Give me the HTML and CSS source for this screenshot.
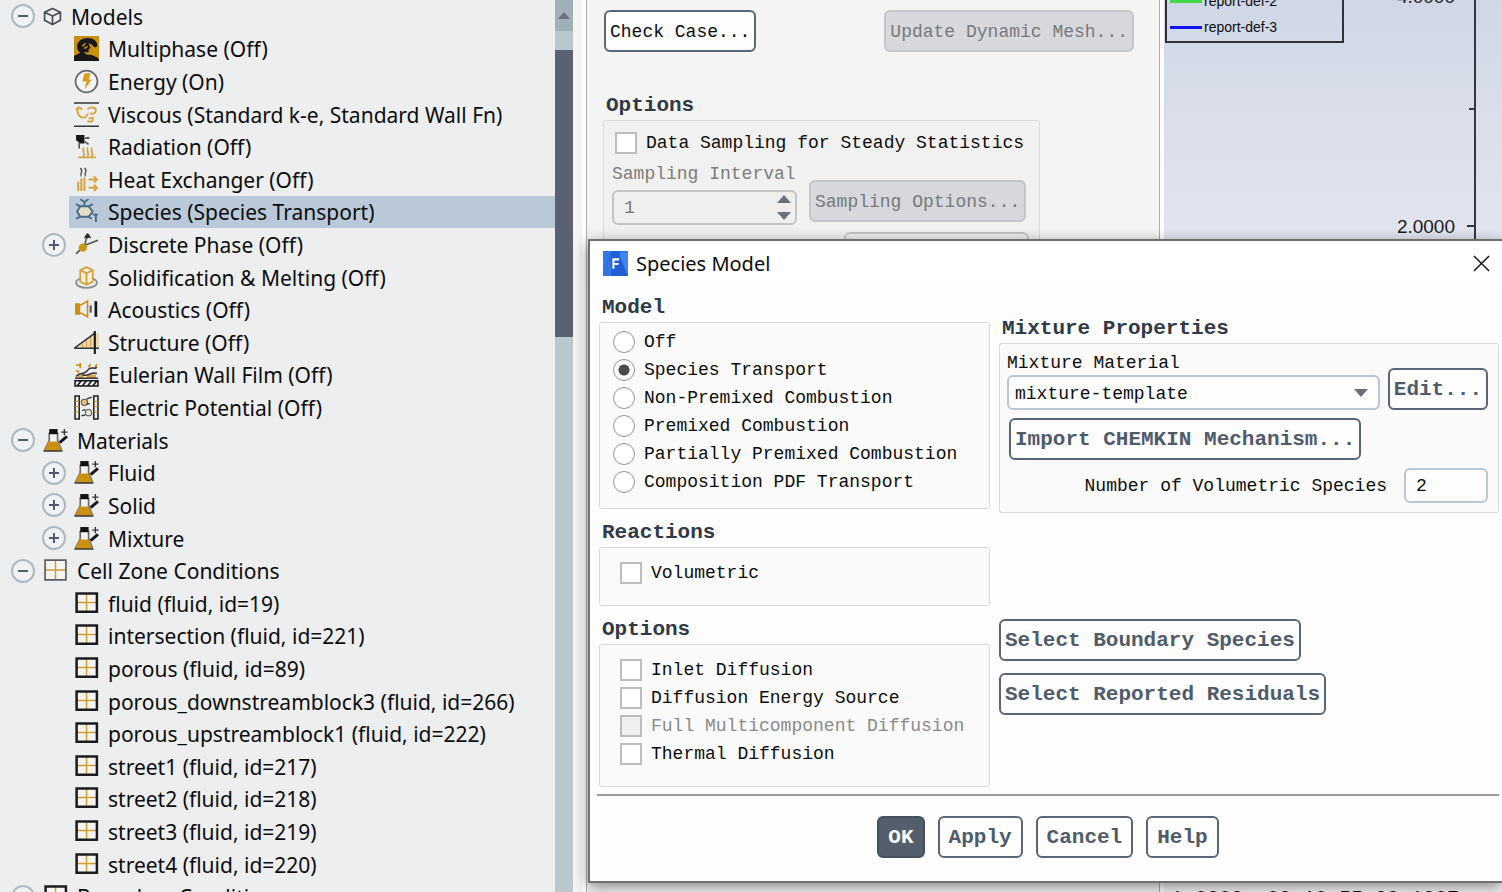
FILE: index.html
```html
<!DOCTYPE html>
<html lang="en">
<head>
<meta charset="utf-8">
<title>Species Model</title>
<link rel="stylesheet" href="styles.css">
</head>
<body>
<svg class="defs" aria-hidden="true">
  <symbol id="i-cube" viewBox="0 0 18 18"><path d="M9 1.500 16.500 5v7.500L9 16.500 1.500 12.500V5zM1.500 5 9 8.500 16.500 5M9 8.500v8" fill="none" stroke="#4a4d55" stroke-width="1.600" stroke-linejoin="round"/></symbol>
  <symbol id="i-multi" viewBox="0 0 24 24"><path fill="#c8900f" d="M0 0h24v24H0z"/><path fill="#17161a" d="M0 19C3 18 4 17 6 16 2 13 2 8 5 5c4-4 11-4 15-1 2 2 3 4 2 6-2 2-4 0-5-2-1 0-2-1-3-1l1 3c2 0 1 4-1 5-1 1-3 1-4 0-1 2 3 3 6 3 3 1 6 2 8 4v2H0z"/><path d="M8 10l3-3M10 12l3-2M14 14l3-3" stroke="#c8900f" stroke-width="1.500"/></symbol>
  <symbol id="i-energy" viewBox="0 0 24 24"><circle cx="12" cy="12" r="10.500" fill="#f5f5f4" stroke="#686c73" stroke-width="1.700"/><path fill="#d99b20" d="M10 4h6l-2 6h3l-7 10 2-8H8z"/></symbol>
  <symbol id="i-viscous" viewBox="0 0 24 24"><path d="M0 1h24M0 23.200h24" stroke="#33353a" stroke-width="1.500"/><g fill="none" stroke="#d9a840" stroke-width="1.800"><path d="M4 6c-2 4 1 9 5 9 2 0 4-2 4-4M2 8l2-3 4 2M13 7c3-3 8-2 8 1s-3 4-6 3M13 18c2 2 6 1 5-3l-4 1"/></g></symbol>
  <symbol id="i-rad" viewBox="0 0 24 24"><path fill="#17181c" d="M2 1h8v8H6L2 6z"/><path d="M10 4h5M10 7l4 3M5 8v6M12 4l2-1" stroke="#555" stroke-width="1.500"/><g fill="none" stroke="#d9a440" stroke-width="1.700"><path d="M9 22c2-3-1-5 0-9M13 22c2-3-1-5 0-9M17 22c2-3-1-5 0-9M4 22.500h17"/></g></symbol>
  <symbol id="i-heat" viewBox="0 0 24 24"><g fill="none" stroke="#55585d" stroke-width="1.400"><path d="M6 1c4 3-1 4 1 8M10 1c4 3-1 4 1 8"/></g><g fill="none" stroke="#d9a440" stroke-width="1.900"><path d="M4 23V14M7 23V11M10 23V10M14 12h8M19 9l3 3-3 3M14 20h8M19 17l3 3-3 3"/></g></symbol>
  <symbol id="i-species" viewBox="0 0 24 24"><path fill="#e2dfc8" d="M7 7h7l4 5-4 5H7l-4-5z"/><path d="M6 7h8l4 5-4 5H6l-3-5zM10 7V3M6 0l4 3 4-3M6 7 2 5M14 7l4-2M6 17l-4 2M14 17l3 2M18 15h5M21 15v7" fill="none" stroke="#496984" stroke-width="1.800"/></symbol>
  <symbol id="i-discrete" viewBox="0 0 24 24"><path d="M2 21 10 13 23 8M10 13l3-10M10 6l3-4 3 4" fill="none" stroke="#55575c" stroke-width="1.600"/><circle cx="8.500" cy="15" r="4" fill="#d09514"/><circle cx="13" cy="4" r="2" fill="#26272b"/></symbol>
  <symbol id="i-solid" viewBox="0 0 24 24"><ellipse cx="12" cy="17" rx="10" ry="5" fill="none" stroke="#8a8d93" stroke-width="1.700"/><path d="M6 5 12 2l6 3v11l-6 3-6-3zM6 5l6 3 6-3M12 8v11" fill="#f4efdf" stroke="#d5a13a" stroke-width="1.700"/></symbol>
  <symbol id="i-acoustic" viewBox="0 0 24 24"><path fill="#c8900f" d="M1 6h5v11H1z"/><path d="M6 8l7-4v15l-7-4" fill="none" stroke="#c8900f" stroke-width="1.500"/><path d="M16 8v7" stroke="#55575c" stroke-width="2"/><path d="M21 4v15" stroke="#17181c" stroke-width="2.600"/></symbol>
  <symbol id="i-structure" viewBox="0 0 24 24"><path fill="#ecd7ad" d="M3 17 20 3h4v14z"/><path d="M8 17v-4M12 17v-8M16 17V6" stroke="#cfa04a" stroke-width="1"/><path d="M0 17.500h24M1 17 20 3" fill="none" stroke="#33353a" stroke-width="1.500"/><path d="M20 1v22" stroke="#17181c" stroke-width="2"/></symbol>
  <symbol id="i-film" viewBox="0 0 24 24"><path d="M2 3h4M6 1v5M14 5l2-3M20 6l2-4M5 10l-3-2" stroke="#d09514" stroke-width="1.800"/><path fill="#d9a440" d="M4 12h5v4H4zM12 12h9v4h-9z"/><path d="M2 14C5 9 10 13 13 8s6 0 9-3M8 12c5 3 8-3 14-1M1 15.500h22" fill="none" stroke="#33353a" stroke-width="1.400"/><path d="M1 18h22v5H1zM3 23l4-5M8 23l4-5M13 23l4-5M18 23l4-5" fill="none" stroke="#17181c" stroke-width="1.500"/></symbol>
  <symbol id="i-electric" viewBox="0 0 24 24"><path d="M1 1h4v22H1zM19 1h4v22h-4z" fill="#f4f1e8" stroke="#222" stroke-width="1.500"/><path d="M1 6h4M1 11h4M1 16h4M19 6h4M19 11h4M19 16h4" stroke="#c8900f"/><circle cx="10" cy="7" r="3" fill="#e4c27c" stroke="#55575c"/><circle cx="14" cy="17" r="3" fill="#e9e5d8" stroke="#55575c"/><path d="M12 4l5-2M7 20l4-1M12 9l3-1M8 15l3-1" stroke="#33353a" stroke-width="1.300"/></symbol>
  <symbol id="i-flask" viewBox="0 0 24 24"><path d="M6 5h8v7l4 10H1l5-10z" fill="#f4f4f4" stroke="#6a6c70" stroke-width="1.600"/><path fill="#cc9110" d="M5 13h9l3.500 8h-16z"/><path fill="#111216" d="M6 1h8v5H6z"/><path d="M1 22h17" stroke="#4a4334" stroke-width="1.200"/><path d="M20.500 1v6M17.500 4h6" stroke="#33353a" stroke-width="1.300"/><path d="M16 14l7-6" stroke="#17181c" stroke-width="2.800"/></symbol>
  <symbol id="i-cells" viewBox="0 0 24 24"><path fill="#f5f4f0" d="M2 2h20v19H2z"/><path d="M12 2v19M2 11.500h20" stroke="#cf9d38" stroke-width="1.400"/><path d="M2 2h20v19H2z" fill="none" stroke="#5b5d62" stroke-width="1.600"/></symbol>
  <symbol id="i-zone" viewBox="0 0 24 24"><path fill="#f5f4f0" d="M2 2h20v18H2z"/><path d="M12 2v18M2 11h20" stroke="#cf9d38" stroke-width="1.400"/><path d="M2.500 2.500h19.500v17.500H2.500z" fill="none" stroke="#1b1c20" stroke-width="2.400"/></symbol>
</svg>

<div class="app">
  <nav class="outline" aria-label="Outline">
    <ul class="tree">
      <li class="row root"><button class="toggle" aria-label="Collapse Models"></button><svg class="icon small"><use href="#i-cube"/></svg><span>Models</span></li>
      <li class="row leaf"><svg class="icon"><use href="#i-multi"/></svg><span>Multiphase (Off)</span></li>
      <li class="row leaf"><svg class="icon"><use href="#i-energy"/></svg><span>Energy (On)</span></li>
      <li class="row leaf"><svg class="icon"><use href="#i-viscous"/></svg><span>Viscous (Standard k-e, Standard Wall Fn)</span></li>
      <li class="row leaf"><svg class="icon"><use href="#i-rad"/></svg><span>Radiation (Off)</span></li>
      <li class="row leaf"><svg class="icon"><use href="#i-heat"/></svg><span>Heat Exchanger (Off)</span></li>
      <li class="row leaf selected"><svg class="icon"><use href="#i-species"/></svg><span>Species (Species Transport)</span></li>
      <li class="row branch"><button class="toggle plus" aria-label="Expand Discrete Phase"></button><svg class="icon"><use href="#i-discrete"/></svg><span>Discrete Phase (Off)</span></li>
      <li class="row leaf"><svg class="icon"><use href="#i-solid"/></svg><span>Solidification &amp; Melting (Off)</span></li>
      <li class="row leaf"><svg class="icon"><use href="#i-acoustic"/></svg><span>Acoustics (Off)</span></li>
      <li class="row leaf"><svg class="icon"><use href="#i-structure"/></svg><span>Structure (Off)</span></li>
      <li class="row leaf"><svg class="icon"><use href="#i-film"/></svg><span>Eulerian Wall Film (Off)</span></li>
      <li class="row leaf"><svg class="icon"><use href="#i-electric"/></svg><span>Electric Potential (Off)</span></li>
      <li class="row root"><button class="toggle" aria-label="Collapse Materials"></button><svg class="icon"><use href="#i-flask"/></svg><span>Materials</span></li>
      <li class="row branch"><button class="toggle plus" aria-label="Expand Fluid"></button><svg class="icon"><use href="#i-flask"/></svg><span>Fluid</span></li>
      <li class="row branch"><button class="toggle plus" aria-label="Expand Solid"></button><svg class="icon"><use href="#i-flask"/></svg><span>Solid</span></li>
      <li class="row branch"><button class="toggle plus" aria-label="Expand Mixture"></button><svg class="icon"><use href="#i-flask"/></svg><span>Mixture</span></li>
      <li class="row root"><button class="toggle" aria-label="Collapse Cell Zone Conditions"></button><svg class="icon"><use href="#i-cells"/></svg><span>Cell Zone Conditions</span></li>
      <li class="row leaf"><svg class="icon"><use href="#i-zone"/></svg><span>fluid (fluid, id=19)</span></li>
      <li class="row leaf"><svg class="icon"><use href="#i-zone"/></svg><span>intersection (fluid, id=221)</span></li>
      <li class="row leaf"><svg class="icon"><use href="#i-zone"/></svg><span>porous (fluid, id=89)</span></li>
      <li class="row leaf"><svg class="icon"><use href="#i-zone"/></svg><span>porous_downstreamblock3 (fluid, id=266)</span></li>
      <li class="row leaf"><svg class="icon"><use href="#i-zone"/></svg><span>porous_upstreamblock1 (fluid, id=222)</span></li>
      <li class="row leaf"><svg class="icon"><use href="#i-zone"/></svg><span>street1 (fluid, id=217)</span></li>
      <li class="row leaf"><svg class="icon"><use href="#i-zone"/></svg><span>street2 (fluid, id=218)</span></li>
      <li class="row leaf"><svg class="icon"><use href="#i-zone"/></svg><span>street3 (fluid, id=219)</span></li>
      <li class="row leaf"><svg class="icon"><use href="#i-zone"/></svg><span>street4 (fluid, id=220)</span></li>
      <li class="row root"><button class="toggle" aria-label="Collapse Boundary Conditions"></button><svg class="icon"><use href="#i-zone"/></svg><span>Boundary Conditions</span></li>
    </ul>
    <div class="scrollbar"><button class="scroll-up" aria-label="Scroll up"></button><div class="thumb"></div></div>
  </nav>

  <main class="task">
    <div class="task-actions">
      <button class="btn plain">Check Case...</button>
      <button class="btn plain" disabled>Update Dynamic Mesh...</button>
    </div>
    <h2 class="heading">Options</h2>
    <section class="group sampling">
      <label class="check"><input type="checkbox">Data Sampling for Steady Statistics</label>
      <div class="pair">
        <div class="spin-field">
          <label class="dim" for="interval">Sampling Interval</label>
          <div class="spin"><input class="text" id="interval" type="text" value="1" disabled><span class="arrows"><i class="up"></i><i class="down"></i></span></div>
        </div>
        <button class="btn plain" disabled>Sampling Options...</button>
      </div>
      <div class="sampled"><label for="sampled">Iterations Sampled</label><input class="text" id="sampled" type="text" value="0" readonly></div>
    </section>
  </main>

  <section class="view">
    <div class="graph">
      <ul class="legend">
        <li><i class="line green"></i>report-def-2</li>
        <li><i class="line blue"></i>report-def-3</li>
      </ul>
      <svg class="axis" viewBox="0 0 110 480" role="img" aria-label="Residual axis">
        <path d="M83 0v480M77 109h6M75 226h8" stroke="#33363e" stroke-width="2"/>
        <text x="63" y="3" text-anchor="end">4.0000</text>
        <text x="63" y="233" text-anchor="end">2.0000</text>
      </svg>
    </div>
    <div class="console">1.0000e-00 10:55:08 1907</div>
  </section>

  <form class="dialog" role="dialog" aria-labelledby="dialog-title" onsubmit="return false">
    <header class="titlebar">
      <svg class="logo" viewBox="0 0 24 24"><path fill="#2f79ea" d="M0 0h24v24H0z"/><path fill="#1f5fd6" d="M0 24 8 0h8v6l8 18z"/><path fill="#69a5f8" d="M0 24 8 2v22zM16 2h8v22z" opacity=".3"/><path fill="none" stroke="#fff" stroke-width="2" d="M10 17V8h5.500M10 12.500h5"/></svg>
      <h1 id="dialog-title">Species Model</h1>
      <button type="button" class="close" aria-label="Close"><svg viewBox="0 0 18 18"><path d="M1 1l16 16M17 1 1 17" stroke="#111" stroke-width="1.500"/></svg></button>
    </header>
    <div class="columns">
      <div class="left">
        <h2 class="heading">Model</h2>
        <section class="group radios">
          <label class="check"><input type="radio" name="model">Off</label>
          <label class="check"><input type="radio" name="model" checked>Species Transport</label>
          <label class="check"><input type="radio" name="model">Non-Premixed Combustion</label>
          <label class="check"><input type="radio" name="model">Premixed Combustion</label>
          <label class="check"><input type="radio" name="model">Partially Premixed Combustion</label>
          <label class="check"><input type="radio" name="model">Composition PDF Transport</label>
        </section>
        <h2 class="heading">Reactions</h2>
        <section class="group boxes">
          <label class="check"><input type="checkbox">Volumetric</label>
        </section>
        <h2 class="heading">Options</h2>
        <section class="group boxes">
          <label class="check"><input type="checkbox">Inlet Diffusion</label>
          <label class="check"><input type="checkbox">Diffusion Energy Source</label>
          <label class="check off"><input type="checkbox" disabled>Full Multicomponent Diffusion</label>
          <label class="check"><input type="checkbox">Thermal Diffusion</label>
        </section>
      </div>
      <div class="right">
        <div>
          <h2 class="heading">Mixture Properties</h2>
          <section class="group mixture">
            <div class="pair">
              <div class="material">
                <label for="material">Mixture Material</label>
                <div class="combo"><select id="material"><option>mixture-template</option></select></div>
              </div>
              <button type="button" class="btn">Edit...</button>
            </div>
            <button type="button" class="btn import">Import CHEMKIN Mechanism...</button>
            <div class="count"><label for="count">Number of Volumetric Species</label><input class="text" id="count" type="text" value="2"></div>
          </section>
        </div>
        <div class="selectors">
          <button type="button" class="btn">Select Boundary Species</button>
          <button type="button" class="btn">Select Reported Residuals</button>
        </div>
      </div>
    </div>
    <footer class="footer">
      <button type="submit" class="btn primary">OK</button>
      <button type="button" class="btn">Apply</button>
      <button type="button" class="btn">Cancel</button>
      <button type="button" class="btn">Help</button>
    </footer>
  </form>
</div>
</body>
</html>
```

FILE: styles.css
```css
* { box-sizing: border-box; }
body { margin: 0; font: 18px/24px "Liberation Mono", monospace; color: #0c0c0c; }
button, input, select { font: inherit; color: inherit; }
ul { list-style: none; margin: 0; padding: 0; }
h1, h2 { margin: 0; }
.defs { position: absolute; width: 0; height: 0; }

.app {
  position: relative;
  display: grid;
  grid-template-columns: 573px 587px 1fr;
  height: 100vh;
  overflow: hidden;
  background: #f4f4f4;
}

/* Outline tree */
.outline { display: grid; grid-template-columns: 1fr 18px; height: 100vh; overflow: hidden; background: #eceeef; }
.tree {
  display: grid;
  grid-auto-rows: 1fr;
  height: calc(100vh + 21px);
  font: 21px/30px "Noto Sans", sans-serif;
  white-space: nowrap;
}
.row { display: flex; align-items: center; gap: 8px; }
.root { padding-left: 11px; }
.branch { padding-left: 42px; }
.leaf { margin-left: 69px; padding-left: 5px; }
.selected { background: #b9c9d9; }
.row .icon { width: 25px; height: 25px; margin-right: 1px; flex: none; }
.row .small { width: 19px; height: 19px; }
.row span { padding-top: 1px; }
.toggle {
  flex: none;
  width: 24px;
  height: 24px;
  padding: 0;
  border: 2px solid #aeb8c2;
  border-radius: 50%;
  background: linear-gradient(#515b6f, #515b6f) center / 10px 2px no-repeat, #f0f2f3;
}
.plus {
  background: linear-gradient(#515b6f, #515b6f) center / 10px 2px no-repeat,
    linear-gradient(#515b6f, #515b6f) center / 2px 10px no-repeat, #f0f2f3;
}
.scrollbar { background: #bac8ce; }
.scroll-up { display: grid; place-items: center; width: 100%; height: 31px; padding: 0; border: 0; background: #9fb0b7; }
.scroll-up::before { content: ""; border: 6px solid transparent; border-bottom: 7px solid #69717f; border-top: 0; }
.thumb { height: 287px; margin-top: 19px; background: #5b6172; }

/* Task page */
.task {
  margin-left: 13px;
  padding: 10px 25px 0 16px;
  border: solid #adadad;
  border-width: 0 1px;
  box-shadow: -4px 0 #fff, 4px 0 #fff;
}
.task-actions { display: flex; justify-content: space-between; margin-bottom: 40px; padding-left: 1px; }
.heading { padding-left: 3px; font-size: 21px; line-height: 28px; color: #2f3947; }
.group { border: 1px solid #dadada; border-radius: 3px; background: #fafafa; }
.sampling { width: fit-content; padding: 8px 10px 20px 8px; background: #f1f1f1; white-space: nowrap; }
.sampling .check { padding-left: 3px; }
.pair { display: flex; align-items: flex-end; gap: 8px; }
.sampling .pair { gap: 12px; margin: 5px 3px 7px 0; }
.sampling .pair .btn { margin-bottom: 3px; }
.spin-field { display: grid; gap: 4px; }
.dim { color: #7c7c7c; }
.spin, .combo { display: grid; align-items: center; }
.spin > *, .combo > *, .combo::after { grid-area: 1 / 1; }
.spin .text { width: 185px; }
.arrows { display: grid; gap: 9px; justify-self: end; margin-right: 6px; }
.up, .down { border: 7px solid transparent; }
.up { border-top: 0; border-bottom: 8px solid #66707f; }
.down { border-bottom: 0; border-top: 8px solid #66707f; }
.sampled { display: flex; align-items: flex-start; justify-content: space-between; gap: 5px; padding-left: 32px; }
.sampled label { padding-top: 3px; }
.sampled .text { width: 185px; }

/* Controls */
.btn {
  height: 42px;
  padding: 2px 4px 0;
  border: 2px solid #5a6675;
  border-radius: 6px;
  background: #fdfdfd;
  color: #4f5b6a;
  font-size: 21px;
  font-weight: bold;
  white-space: nowrap;
}
.plain { color: #0c0c0c; font-size: 18px; font-weight: normal; }
.btn:disabled { border-color: #c3c6ca; background: #d6d8dc; color: #77797c; }
.primary { background: #535f6d; border-color: #465160; color: #fff; }
.text, .combo select {
  height: 35px;
  border: 2px solid #bac6d2;
  border-radius: 6px;
  background: #fdfdfd;
}
.text { padding: 1px 10px 0; }
.task .text { border-color: #c4c4c4; background: #efefef; color: #757575; }
.combo select { width: 100%; padding: 2px 6px 0; appearance: none; }
.combo::after { content: ""; justify-self: end; margin-right: 12px; border: 7px solid transparent; border-top: 8px solid #66707f; border-bottom: 0; pointer-events: none; }
.check { display: flex; align-items: center; gap: 9px; height: 28px; line-height: 26px; white-space: nowrap; }
.check input { appearance: none; flex: none; width: 22px; height: 22px; margin: 0; border: 2px solid #bdbdbd; background: #fff; }
.check input[type="radio"] { border: 1px solid #969696; border-radius: 50%; }
.check input[type="radio"]:checked { background: radial-gradient(circle, #4a4a4a 5px, #fff 6px); }
.off { color: #8a8a8a; }
.off input { background: #f0f0f0; }

/* Graph window */
.view { display: flex; flex-direction: column; margin-left: 4px; min-width: 0; }
.graph { position: relative; display: flex; justify-content: flex-end; flex: 1; background: linear-gradient(#cfd7e6, #dbdfea 130px, #e2e5f0 235px); overflow: hidden; }
.axis { width: 110px; height: 480px; font: 19px "Liberation Sans", sans-serif; fill: #1c1c1c; }
.legend {
  position: absolute;
  left: 1px;
  bottom: calc(100% - 43px);
  width: 179px;
  padding: 0 0 1px 3px;
  border: 2px solid #303238;
  font: 14px/26px "Liberation Sans", sans-serif;
}
.legend li { display: flex; align-items: center; gap: 2px; }
.line { width: 32px; height: 3px; }
.green { background: #41d84a; }
.blue { background: #1212ee; }
.console { flex: none; height: 9px; padding: 4px 7px 0; font-size: 20px; white-space: nowrap; background: #f4f4f4; }

/* Dialog */
.dialog {
  position: absolute;
  top: 239px;
  left: 588px;
  right: 0;
  border: solid #6f6f6f;
  border-width: 2px 0 2px 2px;
  background: #fdfdfd;
  box-shadow: 0 4px 14px rgba(0, 0, 0, .45);
}
.titlebar { display: flex; align-items: center; gap: 8px; height: 45px; padding: 0 12px 0 13px; background: #fff; }
.logo { width: 25px; height: 25px; }
.titlebar h1 { font: 20px/30px "Noto Sans", sans-serif; }
.close { display: grid; margin-left: auto; padding: 0; border: 0; background: none; }
.close svg { width: 17px; height: 17px; }
.columns { display: grid; grid-template-columns: 391fr 500fr; gap: 9px; padding: 8px 3px 7px 9px; }
.left .group + .heading { margin-top: 10px; }
.radios { padding: 5px 13px 12px; }
.boxes { padding: 11px 20px 18px; }
.right { display: flex; flex-direction: column; justify-content: space-between; padding: 21px 0 72px; }
.mixture { display: grid; gap: 8px; padding: 7px 10px 9px 7px; }
.material { flex: 1; display: grid; }
.mixture .import { justify-self: start; margin-left: 2px; }
.count { display: flex; justify-content: flex-end; align-items: center; gap: 17px; }
.count .text { width: 84px; }
.selectors { display: grid; justify-items: start; gap: 12px; }
.footer { display: flex; justify-content: center; gap: 13px; margin: 0 3px 0 7px; padding: 20px 0 23px; border-top: 2px solid #9a9a9a; }
.footer .btn { padding: 2px 9px 0; }
```
